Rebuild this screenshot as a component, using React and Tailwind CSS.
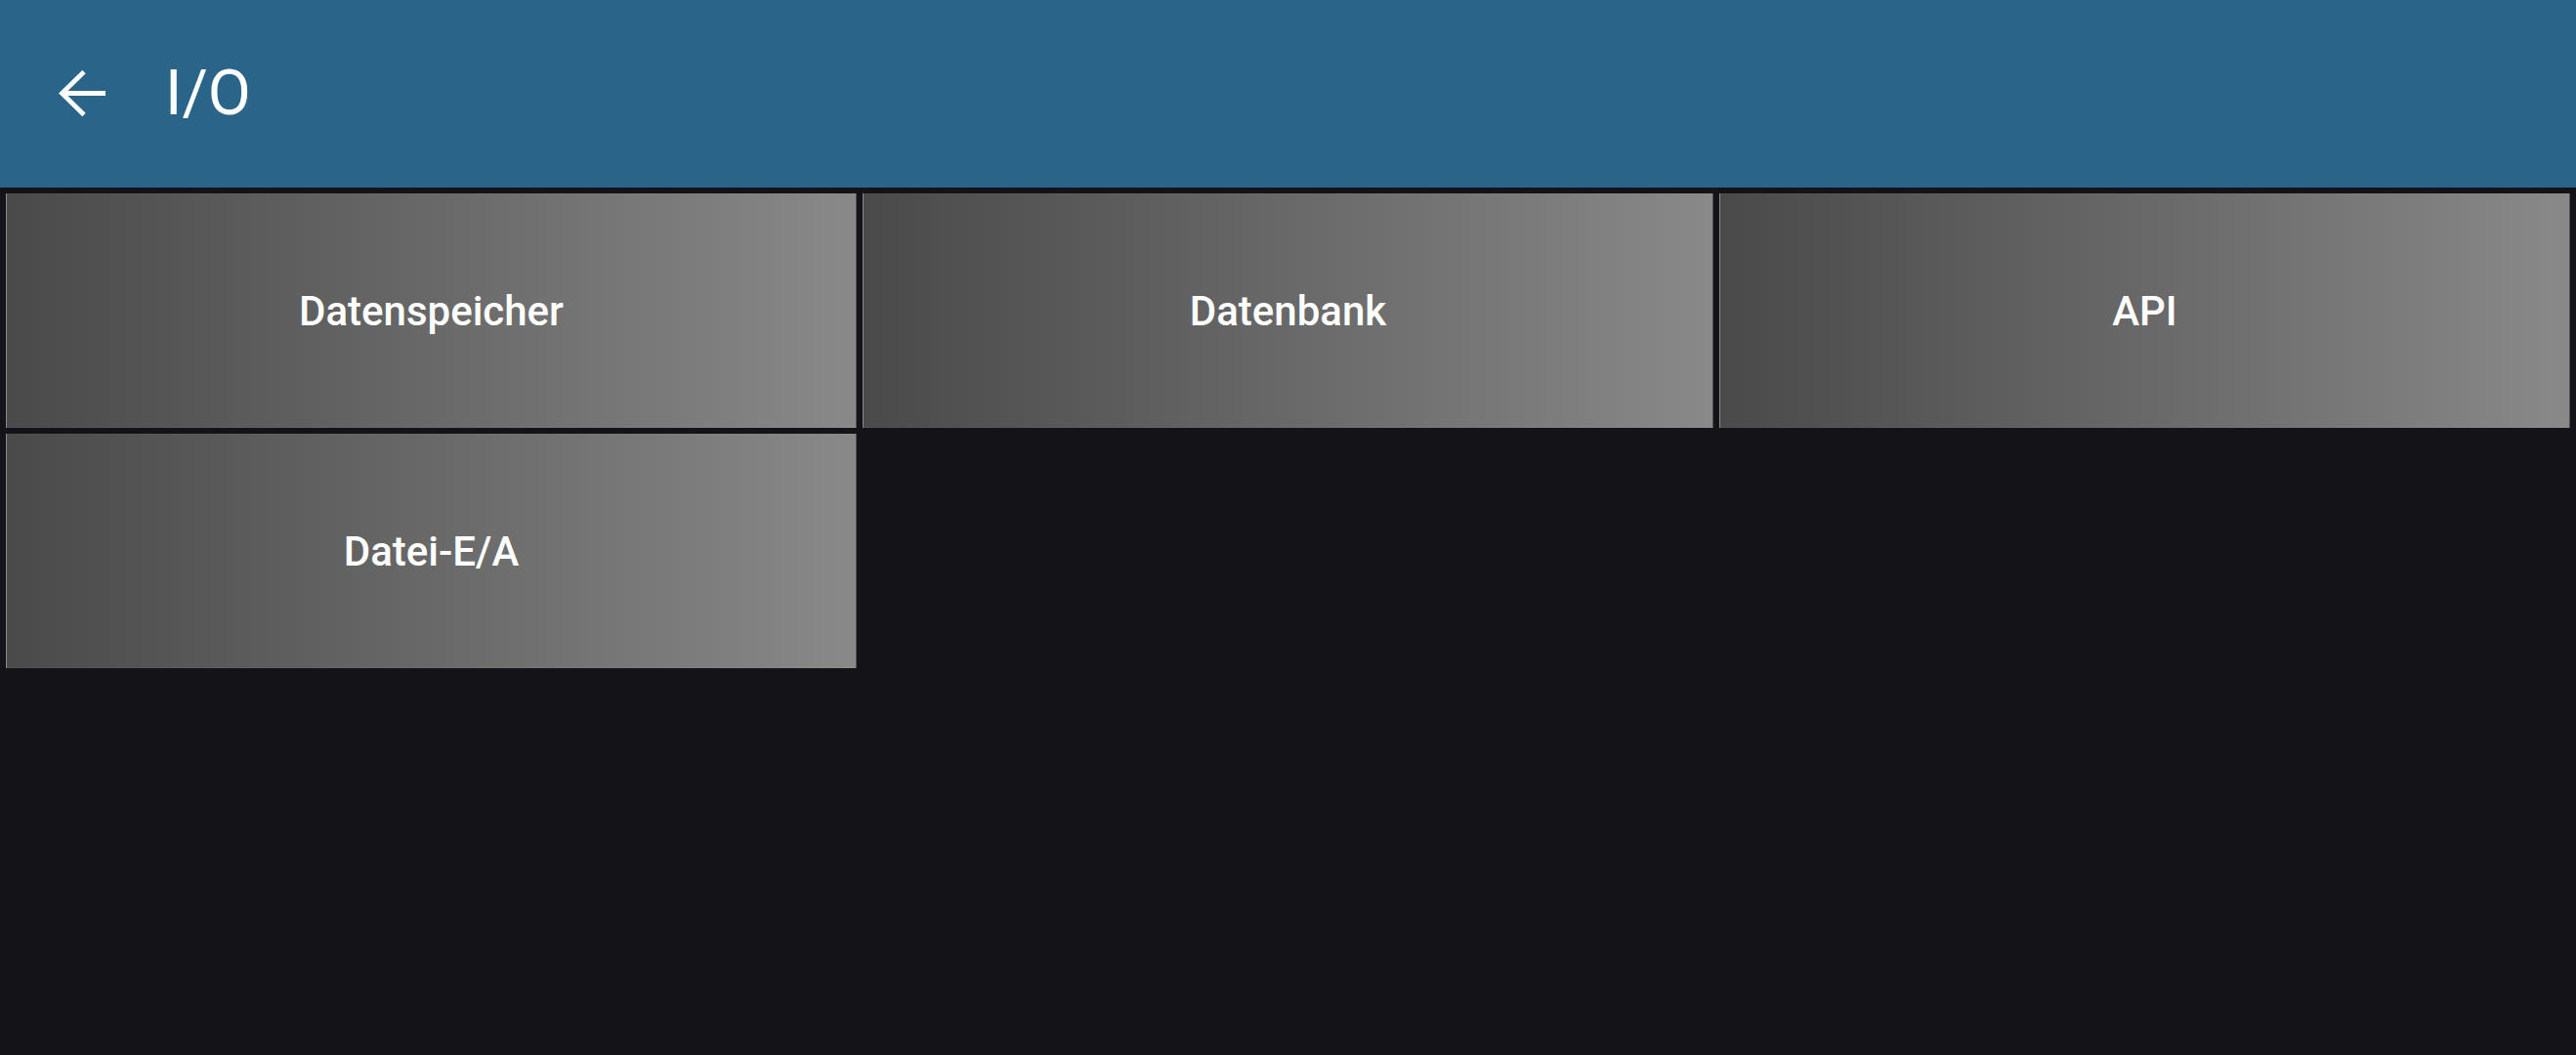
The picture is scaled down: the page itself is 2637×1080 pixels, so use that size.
import React from "react";

const tiles = ["Datenspeicher", "Datenbank", "API", "Datei-E/A"];

export default function App() {
  return (
    <div className="min-h-screen w-full bg-[#141418]" style={{ fontFamily: "Roboto, 'Noto Sans', sans-serif" }}>
      {/* header */}
      <div className="h-[192px] bg-[#2a6589] flex items-center pl-[60px]">
        <svg width="48" height="48" viewBox="0 0 48 48" fill="none" className="shrink-0">
          <path d="M48 23.5H3.5" stroke="white" strokeWidth="4.8" />
          <path d="M26 1.5L3.5 23.5L26 45.5" stroke="white" strokeWidth="4.8" strokeLinejoin="miter" />
        </svg>
        <h1 className="ml-[61px] text-[64px] leading-none text-white font-normal">I/O</h1>
      </div>

      {/* tiles */}
      <div className="grid grid-cols-3 gap-[6px] p-[6px]">
        {tiles.map((t) => (
          <button
            key={t}
            className="h-[240px] flex items-center justify-center bg-gradient-to-r from-[#4a4a4a] to-[#898989] border border-white/[0.03] text-white text-[42px] font-medium"
          >
            {t}
          </button>
        ))}
      </div>
    </div>
  );
}
